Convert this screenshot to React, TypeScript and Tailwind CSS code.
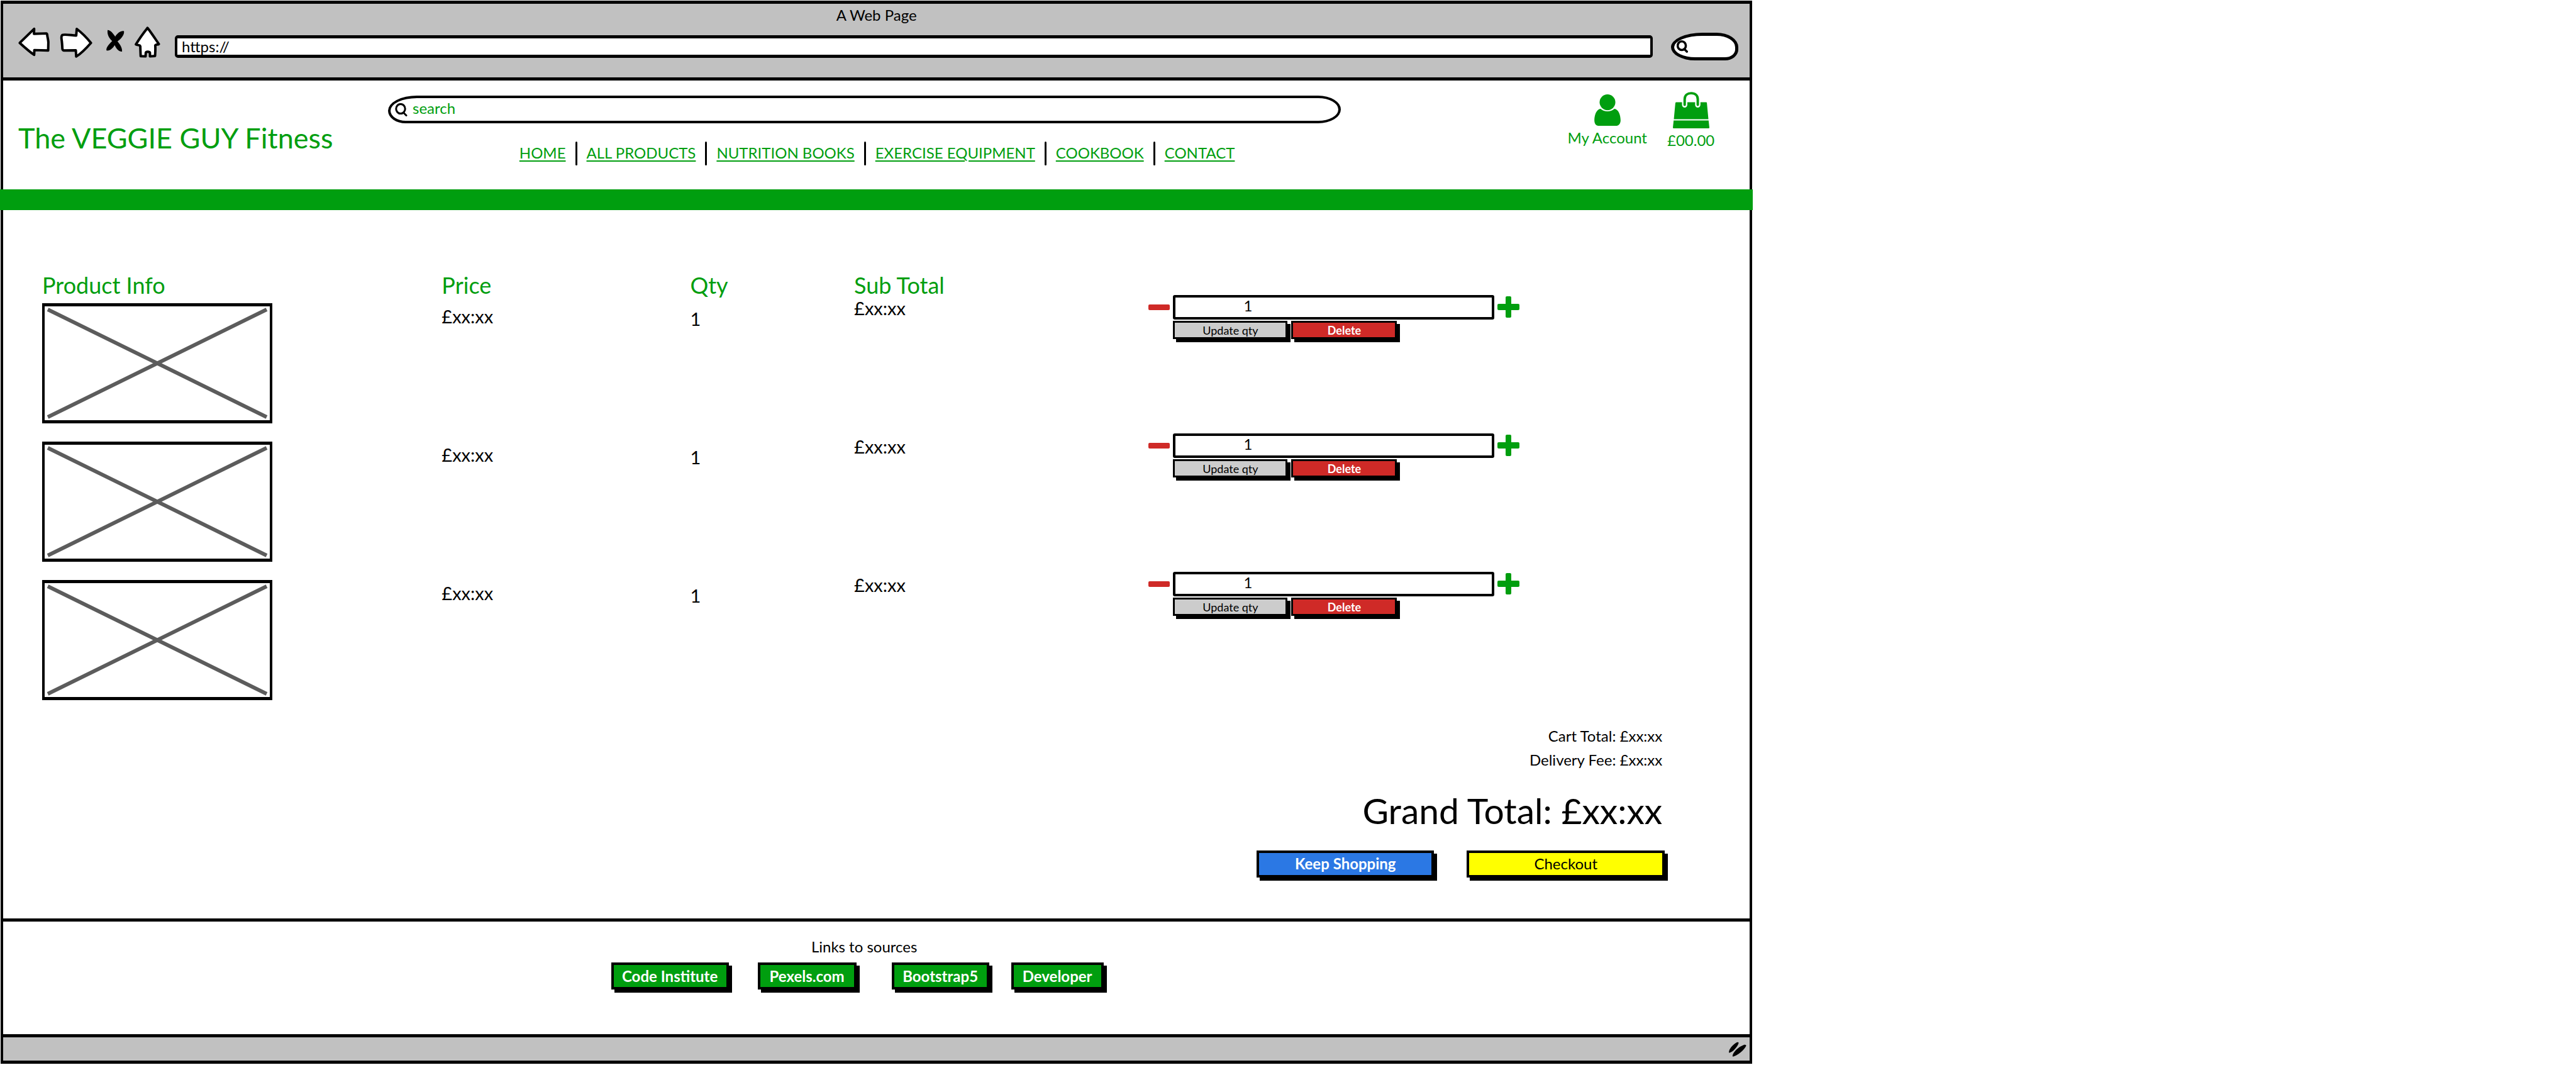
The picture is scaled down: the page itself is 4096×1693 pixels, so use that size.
import React from 'react';

const navLinks = ['HOME', 'ALL PRODUCTS', 'NUTRITION BOOKS', 'EXERCISE EQUIPMENT', 'COOKBOOK', 'CONTACT'];

const cartRows = [1, 2, 3];

const sources = [
  { label: 'Code Institute', box: 'w-[187px] mr-[46px]' },
  { label: 'Pexels.com', box: 'w-[157px] mr-[56px]' },
  { label: 'Bootstrap5', box: 'w-[155px] mr-[35px]' },
  { label: 'Developer', box: 'w-[147px]' },
];

function BackIcon() {
  return (
    <svg viewBox="64 47 166 166" className="block h-[50px] w-[50px]" fill="#fff" stroke="#000" strokeWidth="13" strokeLinejoin="round">
      <path d="M72 134 L148 60 L147 86 L212 84 Q216 84 217 92 C218 104 222 115 223 130 L222 174 L149 172 L148 197 C130 185 95 155 72 134 Z" />
    </svg>
  );
}

function ForwardIcon() {
  return (
    <svg viewBox="286 47 173 166" className="block h-[50px] w-[52px]" fill="#fff" stroke="#000" strokeWidth="13" strokeLinejoin="round">
      <path d="M300 92 C310 88 335 92 373 95 L376 60 C400 78 430 108 451 134 C430 158 400 190 373 206 L371 173 L309 174 Q302 174 300 166 C299 145 298 130 296 118 C294 105 294 96 300 92 Z" />
    </svg>
  );
}

function StopIcon() {
  return (
    <svg viewBox="514 47 116 166" className="block h-[50px] w-[35px]" fill="#000">
      <path d="M541 66 C556 66 570 84 581 101 C592 82 612 68 627 72 C631 90 612 113 593 126 C606 142 619 160 617 180 C600 181 587 166 578 146 C568 164 552 177 535 174 C531 160 548 140 565 124 C548 108 537 88 541 66 Z" />
    </svg>
  );
}

function HomeIcon() {
  return (
    <svg viewBox="682 47 136 166" className="block h-[50px] w-[41px]" fill="#fff" stroke="#000" strokeWidth="13" strokeLinejoin="round">
      <path d="M750 55 C760 66 788 108 810 140 C805 145 796 140 791 147 C793 165 791 185 790 203 L763 205 L763 186 C760 179 743 179 741 186 L740 205 L714 204 L712 152 C710 142 698 148 689 142 C705 115 730 80 750 55 Z" />
    </svg>
  );
}

function MagnifierIcon({ className, weight }: { className: string; weight: number }) {
  return (
    <svg viewBox="0 0 20 21" className={className} fill="none" stroke="#000" strokeWidth={weight} strokeLinecap="round">
      <ellipse cx="9" cy="9" rx="7.2" ry="7.6" />
      <path d="M13.5 15 L18 19.5" />
    </svg>
  );
}

function PersonIcon() {
  return (
    <svg viewBox="180 66 192 192" className="block h-[58px] w-[58px]" fill="#009e0f">
      <circle cx="276" cy="121" r="41.5" />
      <path d="M240 155 C258 173 294 173 312 155 C334 157 345 188 345 216 C345 233 335 245 324 245 L228 245 C215 245 207 232 207 216 C207 188 218 157 240 155 Z" />
    </svg>
  );
}

function BagIcon() {
  return (
    <svg viewBox="624 66 192 192" className="block h-[58px] w-[58px]" fill="#009e0f">
      <path d="M642 121 H799 Q803 121 803 125 L811 210 H629 L637 125 Q638 121 642 121 Z" />
      <path d="M628 217 H812 L816 254 Q816 258 812 258 H628 Q624 258 624 254 Z" />
      <path d="M686 115 V135 M755 115 V135" stroke="#fff" strokeWidth="28" strokeLinecap="round" />
      <path d="M686 134 V105 C686 83 702 73 720 73 C739 73 755 83 755 105 V134" fill="none" stroke="#009e0f" strokeWidth="13" strokeLinecap="round" />
    </svg>
  );
}

function Placeholder() {
  return (
    <div className="h-[191px] w-[366px] border-x-4 border-y-5 border-black bg-white">
      <svg viewBox="0 0 358 181" preserveAspectRatio="none" className="block h-full w-full" role="img" aria-label="Product image" stroke="#5c5c5c" strokeWidth="6">
        <path d="M5 5 L353 176 M353 5 L5 176" />
      </svg>
    </div>
  );
}

function BrowserBar() {
  return (
    <div className="border-b-5 border-black bg-[#c1c1c1] pb-[17px]">
      <p className="text-center leading-9">A Web Page</p>
      <div className="flex items-center pr-[18px] pl-6">
        <div className="mr-[23px] flex gap-4 pb-[14px]">
          <button type="button" aria-label="Back"><BackIcon /></button>
          <button type="button" aria-label="Forward"><ForwardIcon /></button>
          <button type="button" aria-label="Stop"><StopIcon /></button>
          <button type="button" aria-label="Home"><HomeIcon /></button>
        </div>
        <input
          type="text"
          aria-label="Address"
          defaultValue="https://"
          className="h-9 min-w-0 flex-1 rounded-[5px] border-x-4 border-y-5 border-black bg-white pl-[7px] outline-none"
        />
        <label className="ml-[29px] flex h-11 w-[107px] items-center rounded-[52px_36px_22px_40px/24px_24px_18px_22px] border-5 border-black bg-white pl-1">
          <MagnifierIcon className="h-5 w-[18px] shrink-0" weight={4} />
          <input type="text" aria-label="Web search" className="w-full min-w-0 bg-transparent outline-none" />
        </label>
      </div>
    </div>
  );
}

function SiteHeader() {
  return (
    <header className="text-[#009e0f]">
      <div className="grid grid-cols-[612fr_1515fr_650fr] items-start pb-[38px]">
        <h1 className="pt-16 pl-6 text-[45px] leading-[54px] whitespace-nowrap">The VEGGIE GUY Fitness</h1>
        <div className="pt-6">
          <label className="flex h-11 items-center gap-2 rounded-[46px_36px_36px_28px/24px_22px_22px_20px] border-4 border-black bg-white pl-[7px]">
            <MagnifierIcon className="h-[21px] w-5 shrink-0" weight={3} />
            <input type="text" aria-label="Search products" defaultValue="search" className="min-w-0 flex-1 bg-transparent pb-1 outline-none" />
          </label>
          <nav className="mt-[29px] flex h-[38px] items-center justify-center gap-[15px] pl-10">
            {navLinks.map((link, i) => (
              <React.Fragment key={link}>
                {i > 0 && <span className="h-full w-[3px] rounded-full bg-black" />}
                <a href="#" className="pb-0.5 whitespace-nowrap underline decoration-2 underline-offset-[3px]">{link}</a>
              </React.Fragment>
            ))}
          </nav>
        </div>
        <div className="flex justify-end gap-8 pt-[18px] pr-14 leading-[30px]">
          <a href="#" className="flex flex-col items-center"><PersonIcon />My Account</a>
          <a href="#" className="flex flex-col items-center gap-1"><BagIcon />£00.00</a>
        </div>
      </div>
      <div className="-mx-[5px] h-[33px] bg-[#009e0f]" />
    </header>
  );
}

function QuantityControls({ row }: { row: number }) {
  return (
    <div className="grid w-[61.7%] grid-cols-[34px_1fr_35px] items-center gap-x-[5px] gap-y-0.5">
      <button type="button" aria-label="Decrease quantity">
        <svg viewBox="0 0 34 34" className="block h-[34px] w-[34px]" fill="#cf2a27"><rect y="12" width="34" height="9" rx="2" /></svg>
      </button>
      <input
        type="text"
        aria-label={'Quantity for product ' + row}
        defaultValue="1"
        className="h-[39px] w-full min-w-0 rounded-[3px] border-4 border-black bg-white pb-1.5 pl-[108px] outline-none"
      />
      <button type="button" aria-label="Increase quantity">
        <svg viewBox="0 0 35 35" className="block h-[35px] w-[35px]" fill="#009e0f">
          <rect y="12" width="35" height="10" rx="2" />
          <rect x="13" width="9" height="34" rx="2" />
        </svg>
      </button>
      <div className="col-start-2 flex gap-1.5 text-[18px] leading-6">
        <button type="button" className="h-[29px] w-[182px] border-3 border-black bg-[#cccccc] shadow-[5px_5px_0_#000]">Update qty</button>
        <button type="button" className="h-[29px] w-[168px] border-3 border-black bg-[#cf2a27] font-bold text-white shadow-[5px_5px_0_#000]">Delete</button>
      </div>
    </div>
  );
}

function Cart() {
  return (
    <main className="pt-[95px] pb-[65px]">
      <div className="pl-[62px]">
        <table className="w-full table-fixed text-left">
          <thead className="text-[36px] leading-8 text-[#009e0f]">
            <tr>
              <th className="w-[23.4%] pt-2 font-normal">Product Info</th>
              <th className="w-[14.55%] pt-2 font-normal">Price</th>
              <th className="w-[9.6%] pt-2 font-normal">Qty</th>
              <th className="w-[17.25%] pt-2 font-normal">Sub Total</th>
              <td />
            </tr>
          </thead>
          <tbody className="align-top text-[29px] leading-9">
            {cartRows.map((row) => (
              <tr key={row}>
                <td className="pt-[13px] pb-4"><Placeholder /></td>
                <td className="pt-4">£xx:xx</td>
                <td className="pt-5">1</td>
                <td className="pt-[3px]">£xx:xx</td>
                <td className="text-[24px]"><QuantityControls row={row} /></td>
              </tr>
            ))}
          </tbody>
        </table>
      </div>
      <div className="flex flex-col items-end pt-[22px] pr-[139px] leading-[38px]">
        <p>Cart Total: £xx:xx</p>
        <p>Delivery Fee: £xx:xx</p>
        <p className="mt-[26px] text-[57px] leading-[70px]">Grand Total: £xx:xx</p>
        <div className="-mr-1 mt-[29px] flex gap-[52px] leading-8">
          <button type="button" className="h-[43px] w-[282px] border-4 border-black bg-[#2b78e4] pb-0.5 font-bold text-white shadow-[5px_5px_0_#000]">Keep Shopping</button>
          <button type="button" className="h-[43px] w-[315px] border-4 border-black bg-[#ffff00] pb-0.5 shadow-[5px_5px_0_#000]">Checkout</button>
        </div>
      </div>
    </main>
  );
}

function SiteFooter() {
  return (
    <footer className="border-t-5 border-black pt-6 pr-[61px] pb-[71px]">
      <p className="pl-[22px] text-center leading-8">Links to sources</p>
      <div className="mt-[9px] flex justify-center">
        {sources.map((s) => (
          <a
            key={s.label}
            href="#"
            className={'h-[43px] border-4 border-black bg-[#009e0f] text-center leading-9 font-bold text-white shadow-[5px_5px_0_#000] ' + s.box}
          >
            {s.label}
          </a>
        ))}
      </div>
    </footer>
  );
}

export default function App() {
  return (
    <div className="min-h-screen bg-white">
      <div className="flow-root">
        <div className="mt-px ml-px w-[68%] border-x-4 border-y-5 border-black font-['Lato',sans-serif] text-[24px] text-black">
          <BrowserBar />
          <SiteHeader />
          <Cart />
          <SiteFooter />
          <div className="flex h-[42px] items-center justify-end border-t-5 border-black bg-[#c1c1c1] pr-[5px]">
            <svg viewBox="440 112 96 80" className="h-6 w-[29px]" fill="#000">
              <path d="M485 115 Q494 112 495 119 C488 140 466 166 445 171 C438 162 455 132 485 115 Z" />
              <path d="M525 128 Q534 126 535 133 C524 156 490 186 464 191 C456 182 484 142 525 128 Z" />
            </svg>
          </div>
        </div>
      </div>
    </div>
  );
}
